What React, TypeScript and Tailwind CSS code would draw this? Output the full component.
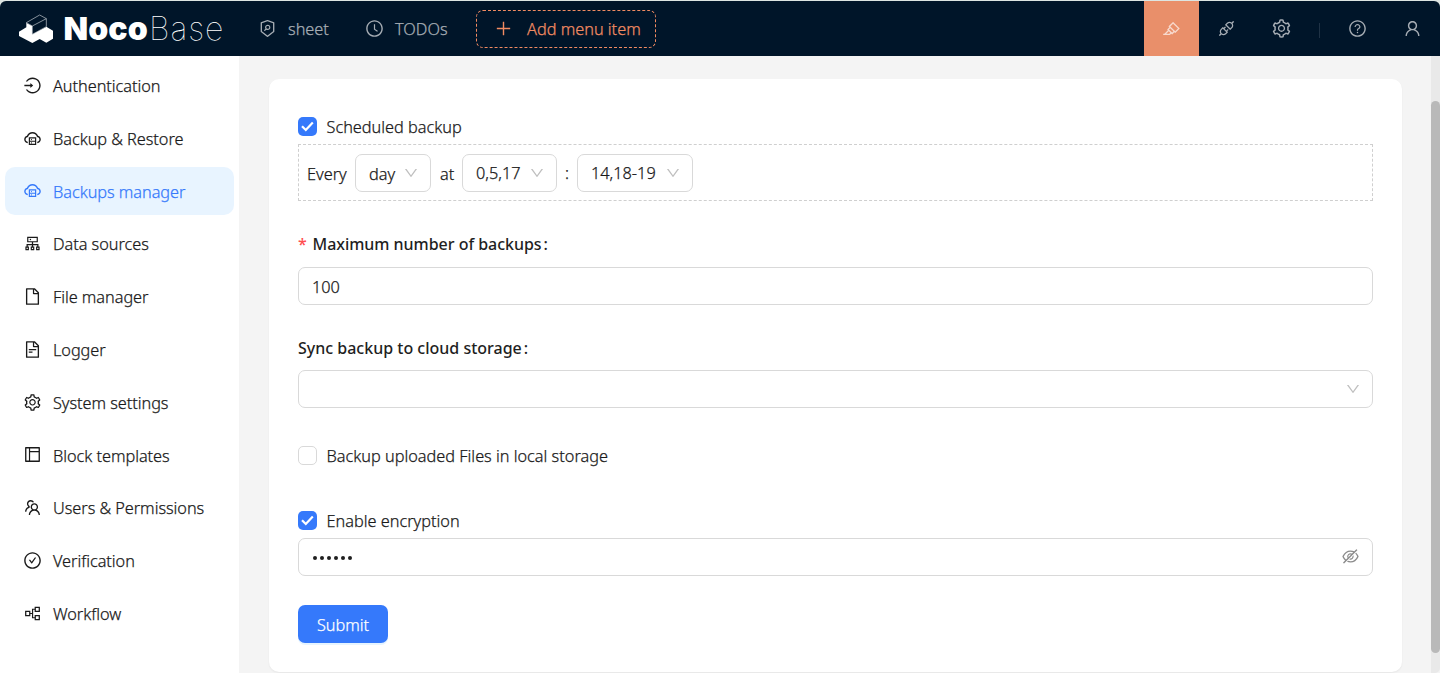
import type { ReactNode } from 'react';
import type { IconType } from 'react-icons';
import {
  AiOutlineApi, AiOutlineCheckCircle, AiOutlineClockCircle, AiOutlineCloudServer, AiOutlineCluster,
  AiOutlineDown, AiOutlineEyeInvisible, AiOutlineFile, AiOutlineFileText, AiOutlineHighlight,
  AiOutlineLayout, AiOutlineLogin, AiOutlinePartition, AiOutlinePlus, AiOutlineQuestionCircle,
  AiOutlineSecurityScan, AiOutlineSetting, AiOutlineTeam, AiOutlineUser,
} from 'react-icons/ai';

const menu: { label: string; icon: IconType; active?: boolean }[] = [
  { label: 'Authentication', icon: AiOutlineLogin },
  { label: 'Backup & Restore', icon: AiOutlineCloudServer },
  { label: 'Backups manager', icon: AiOutlineCloudServer, active: true },
  { label: 'Data sources', icon: AiOutlineCluster },
  { label: 'File manager', icon: AiOutlineFile },
  { label: 'Logger', icon: AiOutlineFileText },
  { label: 'System settings', icon: AiOutlineSetting },
  { label: 'Block templates', icon: AiOutlineLayout },
  { label: 'Users & Permissions', icon: AiOutlineTeam },
  { label: 'Verification', icon: AiOutlineCheckCircle },
  { label: 'Workflow', icon: AiOutlinePartition },
];

function Logo() {
  return (
    <div className="flex h-full w-[240px] shrink-0 items-center pl-[18px] text-white [-webkit-text-stroke:0]">
      <svg width="36" height="30.67" viewBox="12 14 108 92" className="shrink-0">
        <path d="M15 70 L37 57 V43 L55 53 V77 L76 66 L97 55 L117 67 V91 L97 103 L77 92 L55 104 L15 83 Z" fill="#fff" />
        <path d="M37 43 L77 20 L97 31 V55 L55 78 V53 Z" fill="#001529" stroke="#c9ced3" strokeWidth="2" />
        <path d="M55 53 L97 31" fill="none" stroke="#c9ced3" strokeWidth="2" />
      </svg>
      <div className="ml-[9.5px] flex font-['Inter',sans-serif] text-[32px] leading-none">
        <span className="w-[85.5px] font-black tracking-[0.1px]">Noco</span>
        <span className="font-thin tracking-[1px]">Base</span>
      </div>
    </div>
  );
}

function Checkbox({ checked, children }: { checked?: boolean; children: ReactNode }) {
  return (
    <label className="flex h-[26px] items-start">
      {checked ? (
        <span className="mt-[3px] flex size-[19px] items-center justify-center rounded-[5px] bg-[#3579fb]">
          <svg width="13" height="11" viewBox="0 0 13 11">
            <path d="M1 5.2 L4.8 9 L11.8 1.4" fill="none" stroke="#fff" strokeWidth="2.2" />
          </svg>
        </span>
      ) : (
        <span className="mt-[3px] size-[19px] rounded-[5px] border border-[#d9d9d9] bg-white" />
      )}
      <span className="ml-[9.5px]">{children}</span>
    </label>
  );
}

function Select({ children, className }: { children: ReactNode; className: string }) {
  return (
    <div className={`flex h-[38px] items-center justify-between rounded-[7px] border border-[#d9d9d9] bg-white pr-[11px] pl-[13px] ${className}`}>
      <span>{children}</span>
      <AiOutlineDown className="size-[16px] text-[#bfbfbf]" />
    </div>
  );
}

export default function App() {
  return (
    <div className="flex h-[673px] w-[1440px] flex-col overflow-hidden bg-[#dde5e2] pt-px font-['Noto_Sans',sans-serif] text-[16.3px] leading-[26px] font-light text-[#1a1a1a] [-webkit-text-stroke:0.25px]">
      <header className="flex h-[55px] shrink-0 items-center rounded-t-[6px] bg-[#001529] text-[#a6adb4]">
        <Logo />
        <div className="flex items-center pl-[18px]">
          <AiOutlineSecurityScan className="size-[19px]" />
          <span className="ml-[11px] w-[41px]">sheet</span>
        </div>
        <div className="flex items-center pl-[36px]">
          <AiOutlineClockCircle className="size-[19px]" />
          <span className="ml-[11px] w-[54px]">TODOs</span>
        </div>
        <div className="ml-[27px] flex h-[38px] w-[180px] items-center rounded-[7px] border border-dashed border-[#f18b62] pl-[17px] text-[#f18b62]">
          <AiOutlinePlus className="size-[19px]" />
          <span className="ml-[14px] whitespace-nowrap">Add menu item</span>
        </div>
        <div className="ml-auto flex h-full items-center">
          <div className="flex h-full w-[55px] items-center justify-center bg-[#e98f6a] text-[#f8d9cd]"><AiOutlineHighlight className="size-[19px]" /></div>
          <div className="flex w-[55px] justify-center"><AiOutlineApi className="size-[19px]" /></div>
          <div className="flex w-[55px] justify-center"><AiOutlineSetting className="size-[21px]" /></div>
          <div className="mx-[10px] mt-[3px] h-[15px] w-px bg-[#1f3245]" />
          <div className="flex w-[55px] justify-center"><AiOutlineQuestionCircle className="size-[19px]" /></div>
          <div className="flex w-[55px] justify-center"><AiOutlineUser className="size-[19px]" /></div>
        </div>
      </header>

      <div className="flex min-h-0 flex-1 bg-[#f4f4f4]">
        <nav className="flex w-[239px] shrink-0 flex-col gap-[4.8px] bg-white px-[5px] pt-[5.4px]">
          {menu.map(({ label, icon: Icon, active }) => (
            <div
              key={label}
              className={`flex h-12 shrink-0 items-center rounded-[10px] pl-[18px] ${active ? 'bg-[#e8f4ff] text-[#3579fb]' : ''}`}
            >
              <Icon className="size-[19px]" />
              <span className="ml-[11px] pt-[1.4px] tracking-[-0.04px]">{label}</span>
            </div>
          ))}
        </nav>

        <main className="min-w-0 flex-1 pt-[23px] pl-[30px]">
          <section className="flex h-[592.5px] w-[1133px] flex-col rounded-[10px] bg-white px-[29px] pt-[35px] shadow-[0_1px_2px_rgba(0,0,0,0.06)]">
            <Checkbox checked>Scheduled backup</Checkbox>
            <div className="mt-[4px] flex h-[57px] items-center border border-dashed border-[#cfcfcf] pl-[8px]">
              <span className="w-[48px] pt-[2px]">Every</span>
              <Select className="w-[76px]"><span className="inline-block pt-[2px]">day</span></Select>
              <span className="ml-[9px] w-[22px] pt-[2px]">at</span>
              <Select className="w-[95px]">0,5,17</Select>
              <span className="ml-[8px] w-[12px]">:</span>
              <Select className="w-[116px]">14,18-19</Select>
            </div>

            <div className="mt-[30px] flex text-[16px] font-medium text-[#1f1f1f] [-webkit-text-stroke:0]">
              <span className="w-[14.5px] text-[#ff4d4f]">*</span>
              <span className="tracking-[-0.03px]">Maximum number of backups</span><span className="ml-[2px]">:</span>
            </div>
            <div className="mt-[10px] flex h-[38px] items-center rounded-[7px] border border-[#d9d9d9] pt-[1px] pl-[13px]">100</div>

            <div className="mt-[30px] flex text-[16px] font-medium text-[#1f1f1f] [-webkit-text-stroke:0]">
              Sync backup to cloud storage<span className="ml-[2px]">:</span>
            </div>
            <div className="mt-[9px] flex h-[38px] items-center justify-end rounded-[7px] border border-[#d9d9d9] pr-[11px]">
              <AiOutlineDown className="size-[16px] text-[#bfbfbf]" />
            </div>

            <div className="mt-[35px]"><Checkbox>Backup uploaded Files in local storage</Checkbox></div>
            <div className="mt-[39px]"><Checkbox checked>Enable encryption</Checkbox></div>
            <div className="mt-[4px] flex h-[38px] items-center justify-between rounded-[7px] border border-[#d9d9d9] pr-[12px] pl-[14px]">
              <span className="flex gap-[2.8px] pt-[2px]">
                {[0, 1, 2, 3, 4, 5].map((n) => (
                  <span key={n} className="size-[4.2px] rounded-full bg-[#1f1f1f]" />
                ))}
              </span>
              <AiOutlineEyeInvisible className="mb-[2px] size-[19px] text-[#8c8c8c]" />
            </div>
            <button className="mt-[29px] flex h-[38px] w-[90px] items-center justify-center rounded-[7px] bg-[#3579fb] pt-[1px] text-white shadow-[0_2px_0_rgba(5,145,255,0.1)]">
              Submit
            </button>
          </section>
        </main>

        <div className="w-[9px] shrink-0 rounded-br-[5px] bg-[#e9e9e9] pt-[45px]">
          <div className="h-[552px] rounded-full bg-[#b9b9b9]" />
        </div>
      </div>
    </div>
  );
}
